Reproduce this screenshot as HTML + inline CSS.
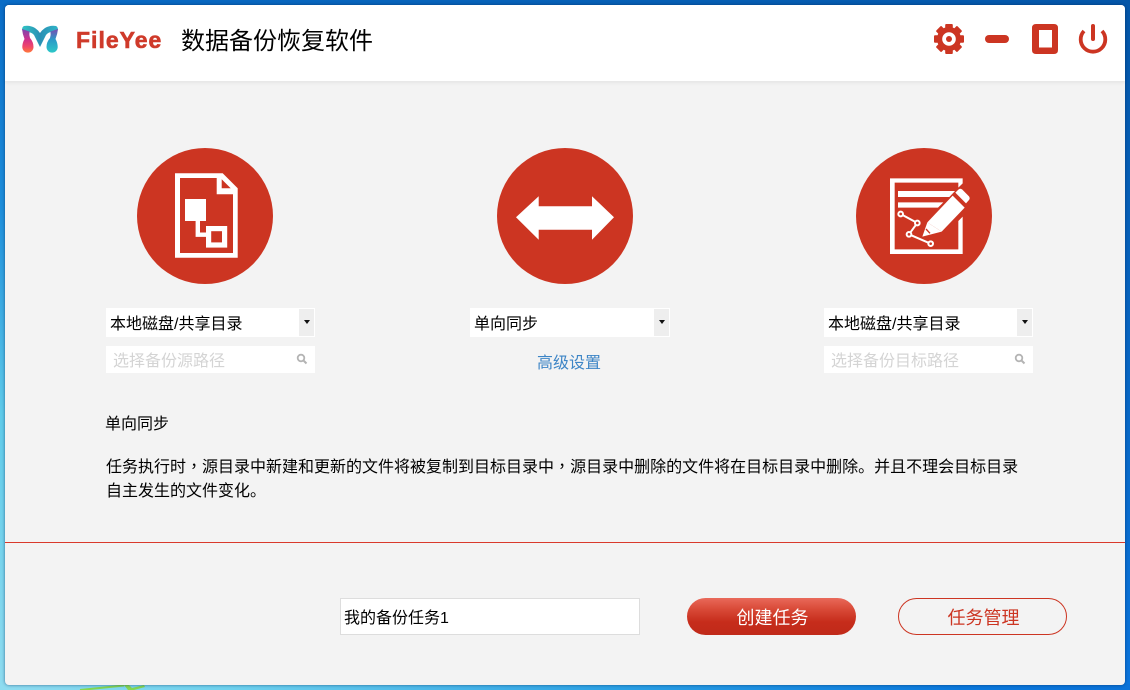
<!DOCTYPE html>
<html lang="zh">
<head>
<meta charset="utf-8">
<style>
html,body{margin:0;padding:0}
body{width:1130px;height:690px;position:relative;overflow:hidden;background:#0a72d4;font-family:"Liberation Sans","Noto Sans CJK SC",sans-serif;color:#000}
.abs{position:absolute;white-space:nowrap}
#bg{position:absolute;left:0;top:0;width:1130px;height:690px}
#win{position:absolute;left:5px;top:5px;width:1120px;height:680px;background:#f3f3f3;border-radius:4px;overflow:hidden;box-shadow:0 0 3px rgba(0,40,90,.6)}
#head{position:absolute;left:5px;top:5px;width:1120px;height:76px;background:#fff;border-radius:4px 4px 0 0;box-shadow:0 2px 3px rgba(0,0,0,.06)}
.circle{position:absolute;top:148px;width:136px;height:136px;border-radius:50%;background:#cc3522}
.sel{position:absolute;top:308px;height:29px;background:#fff;font-size:16px;line-height:33px;text-indent:4px}
.sel i{position:absolute;right:1px;top:1px;width:15px;height:27px;background:#eee}
.sel i:after{content:"";position:absolute;left:5px;top:11px;border:3px solid transparent;border-top:4px solid #111;border-bottom:0}
.search{position:absolute;top:346px;width:209px;height:27px;background:#fff;font-size:16px;line-height:31px;color:#d4d4d4;text-indent:7px}
.search svg{position:absolute;left:190px;top:7px}
.txt{font-size:16px;line-height:25px}
.tc{font-family:"Noto Sans CJK TC",sans-serif;line-height:0}
.btn{position:absolute;top:598px;height:37px;box-sizing:border-box;border-radius:19px;text-align:center;font-size:18px;line-height:41px;padding-left:2px}
</style>
</head>
<body>
<svg id="bg" viewBox="0 0 1130 690">
<defs>
<linearGradient id="l" x1="0" y1="0" x2="0" y2="1">
<stop offset="0" stop-color="#0a6cc6"/><stop offset=".3" stop-color="#1d8edb"/><stop offset=".6" stop-color="#5fcbea"/><stop offset="1" stop-color="#8fdcf0"/>
</linearGradient>
<linearGradient id="b" x1="0" y1="0" x2="1" y2="0">
<stop offset="0" stop-color="#8fdcf0"/><stop offset=".2" stop-color="#6fd2ee"/><stop offset=".55" stop-color="#2aa0e4"/><stop offset=".85" stop-color="#0a78dc"/><stop offset="1" stop-color="#0a72d8"/>
</linearGradient>
<linearGradient id="t" x1="0" y1="0" x2="1" y2="0">
<stop offset="0" stop-color="#0a6cc6"/><stop offset="1" stop-color="#0456a8"/>
</linearGradient>
<linearGradient id="r" x1="0" y1="0" x2="0" y2="1">
<stop offset="0" stop-color="#0456a8"/><stop offset="1" stop-color="#0a74dc"/>
</linearGradient>
</defs>
<rect x="0" y="0" width="6" height="690" fill="url(#l)"/>
<rect x="1124" y="0" width="6" height="690" fill="url(#r)"/>
<rect x="0" y="0" width="1130" height="6" fill="url(#t)"/>
<rect x="0" y="684" width="1130" height="6" fill="url(#b)"/>
<path d="M80 690L124 685.500" stroke="#86d850" stroke-width="2" fill="none"/>
<path d="M124 685L128 690H134L145 687L144 685L132 688L129 685Z" fill="#86d850"/>
</svg>
<div id="win"></div>
<div id="head"></div>

<!-- logo -->
<svg class="abs" style="left:20px;top:24px" width="40" height="32" viewBox="20 24 40 32">
<defs>
<linearGradient id="m1" x1="0" y1="0" x2="0" y2="1"><stop offset="0" stop-color="#7a48b0"/><stop offset=".45" stop-color="#d0308c"/><stop offset=".75" stop-color="#f04868"/><stop offset="1" stop-color="#ff7a3a"/></linearGradient>
<linearGradient id="m2" x1="0" y1="0" x2="0" y2="1"><stop offset="0" stop-color="#7a4ab0"/><stop offset=".45" stop-color="#2a9ac8"/><stop offset="1" stop-color="#2cc8c8"/></linearGradient>
<linearGradient id="m3" x1="0" y1="0" x2="1" y2="0"><stop offset="0" stop-color="#30c4c4"/><stop offset=".5" stop-color="#2a90b4"/><stop offset="1" stop-color="#30b4c8"/></linearGradient>
</defs>
<path d="M24 26Q30 25 35 28Q38 30 40 33Q42 30 45 28Q50 25 56 26Q58 27 58 30L51 32Q48 32.500 46 35L40 47L34 35Q32 32.500 28 32L22 30Q22 27 24 26Z" fill="url(#m3)"/>
<path d="M22 29L29.500 31.500Q29 35 30 38Q33.500 42 33.500 47A5.600 5.600 0 0 1 22.300 47Q22.300 43 24.500 39Q22.500 34 22 29Z" fill="url(#m1)"/>
<path d="M58 29L50.500 31.500Q51 35 50 38Q46.500 42 46.500 47A5.600 5.600 0 0 0 57.700 47Q57.700 43 55.500 39Q57.500 34 58 29Z" fill="url(#m2)"/>
</svg>
<div class="abs" style="left:76px;top:25px;font-size:23px;line-height:30px;font-weight:bold;color:#cf3a2a;letter-spacing:1px;-webkit-text-stroke:.6px #cf3a2a">FileYee</div>
<div class="abs" style="left:181px;top:26px;font-size:24px;line-height:32px">数据备份恢复软件</div>

<!-- window controls -->
<svg class="abs" style="left:930px;top:20px" width="180" height="40" viewBox="930 20 180 40">
<g fill="#cc3522">
<rect x="945.200" y="24" width="7.600" height="7" rx="1"/>
<rect x="945.200" y="24" width="7.600" height="7" rx="1" transform="rotate(45 949 39)"/>
<rect x="945.200" y="24" width="7.600" height="7" rx="1" transform="rotate(90 949 39)"/>
<rect x="945.200" y="24" width="7.600" height="7" rx="1" transform="rotate(135 949 39)"/>
<rect x="945.200" y="24" width="7.600" height="7" rx="1" transform="rotate(180 949 39)"/>
<rect x="945.200" y="24" width="7.600" height="7" rx="1" transform="rotate(225 949 39)"/>
<rect x="945.200" y="24" width="7.600" height="7" rx="1" transform="rotate(270 949 39)"/>
<rect x="945.200" y="24" width="7.600" height="7" rx="1" transform="rotate(315 949 39)"/>
<circle cx="949" cy="39" r="12"/>
<circle cx="949" cy="39" r="6.800" fill="#fff"/>
<circle cx="949" cy="39" r="3"/>
<rect x="985" y="35" width="24" height="8" rx="4"/>
<path fill-rule="evenodd" d="M1036 24H1054Q1058 24 1058 28V50Q1058 54 1054 54H1036Q1032 54 1032 50V28Q1032 24 1036 24ZM1039 30V47.500H1052V30Z"/>
</g>
<path d="M1084 31A12.300 12.300 0 1 0 1102 31" fill="none" stroke="#cc3522" stroke-width="3.800"/>
<path d="M1093 26V39" stroke="#cc3522" stroke-width="4" stroke-linecap="round" fill="none"/>
</svg>

<!-- circles -->
<div class="circle" style="left:137px"></div>
<div class="circle" style="left:497px"></div>
<div class="circle" style="left:856px"></div>

<svg class="abs" style="left:137px;top:148px" width="136" height="136" viewBox="137 148 136 136">
<path fill="#fff" fill-rule="evenodd" d="M175 173.300H222.700L237.700 188.300V257.700H175ZM180 178V253H233V194.300H216.700V178ZM221.700 179.300V188.300H230.700Z"/>
<rect x="185" y="199" width="21" height="22" fill="#fff"/>
<path d="M197.800 220V234.700H207" fill="none" stroke="#fff" stroke-width="4.400"/>
<rect x="208.600" y="228.600" width="16" height="16.400" fill="none" stroke="#fff" stroke-width="5.200"/>
</svg>

<svg class="abs" style="left:497px;top:148px" width="136" height="136" viewBox="497 148 136 136">
<path d="M516 217.300L538.700 196.300V206.300H592V196.300L614 217.300L592 239.700V229.700H538.700V239.700Z" fill="#fff"/>
</svg>

<svg class="abs" style="left:856px;top:148px" width="136" height="136" viewBox="856 148 136 136">
<g transform="translate(840 135) scale(.33333)">
<path fill="#fff" fill-rule="evenodd" d="M150 130H368V145L355 158V143H164V343H355V258L368 245V357H150Z"/>
<path fill="#fff" d="M174 168H345L328 186H174Z"/>
<path fill="#fff" d="M174 202H310L294 218H174Z"/>
<path fill="#fff" d="M262 262L338 182L374 218L305 290Z"/>
<path fill="#fff" d="M262 262L305 290L247 305Z"/>
<path fill="#fff" d="M346 173L356 163Q362 159 367 164L387 184Q391 190 387 195L378 205Z"/>
<path d="M258 282L270 295" stroke="#cc3522" stroke-width="4" fill="none"/>
<path d="M182 237L232 264L207 298L272 326" fill="none" stroke="#fff" stroke-width="6"/>
<g fill="#cc3522" stroke="#fff" stroke-width="6">
<circle cx="182" cy="237" r="7"/>
<circle cx="232" cy="264" r="7"/>
<circle cx="207" cy="298" r="7"/>
<circle cx="272" cy="326" r="7"/>
</g>
</g>
</svg>

<!-- selects -->
<div class="sel" style="left:106px;width:209px">本地磁盘/共享目录<i></i></div>
<div class="sel" style="left:470px;width:200px">单向同步<i></i></div>
<div class="sel" style="left:824px;width:209px">本地磁盘/共享目录<i></i></div>

<div class="search" style="left:106px">选择备份源路径
<svg width="12" height="12" viewBox="0 0 12 12"><circle cx="5" cy="5" r="3.300" fill="none" stroke="#b4b4b4" stroke-width="1.800"/><path d="M7.500 7.500L10.500 10.500" stroke="#b4b4b4" stroke-width="2"/></svg></div>
<div class="search" style="left:824px">选择备份目标路径
<svg width="12" height="12" viewBox="0 0 12 12"><circle cx="5" cy="5" r="3.300" fill="none" stroke="#b4b4b4" stroke-width="1.800"/><path d="M7.500 7.500L10.500 10.500" stroke="#b4b4b4" stroke-width="2"/></svg></div>

<div class="abs" style="left:537px;top:352px;font-size:16px;line-height:24px;color:#3d85c6">高级设置</div>

<!-- description -->
<div class="abs txt" style="left:105px;top:412px">单向同步</div>
<div class="abs txt" style="left:106px;top:455px">任务执行时<span class="tc" lang="zh-TW">，</span>源目录中新建和更新的文件将被复制到目标目录中<span class="tc" lang="zh-TW">，</span>源目录中删除的文件将在目标目录中删除。并且不理会目标目录</div>
<div class="abs txt" style="left:106px;top:479px">自主发生的文件变化。</div>

<div class="abs" style="left:5px;top:542px;width:1120px;height:1px;background:#d9392b"></div>

<!-- footer -->
<div class="abs" style="left:340px;top:598px;width:300px;height:37px;box-sizing:border-box;background:#fff;border:1px solid #ddd;font-size:16px;line-height:39px;padding-left:3px">我的备份任务1</div>
<div class="btn" style="left:687px;width:169px;color:#fff;background:linear-gradient(#e9695a 0,#d94a38 30%,#c62c1b 65%,#c02a1a 100%)">创建任务</div>
<div class="btn" style="left:898px;width:169px;color:#cc3522;border:1px solid #cc3522;line-height:39px">任务管理</div>
</body>
</html>
